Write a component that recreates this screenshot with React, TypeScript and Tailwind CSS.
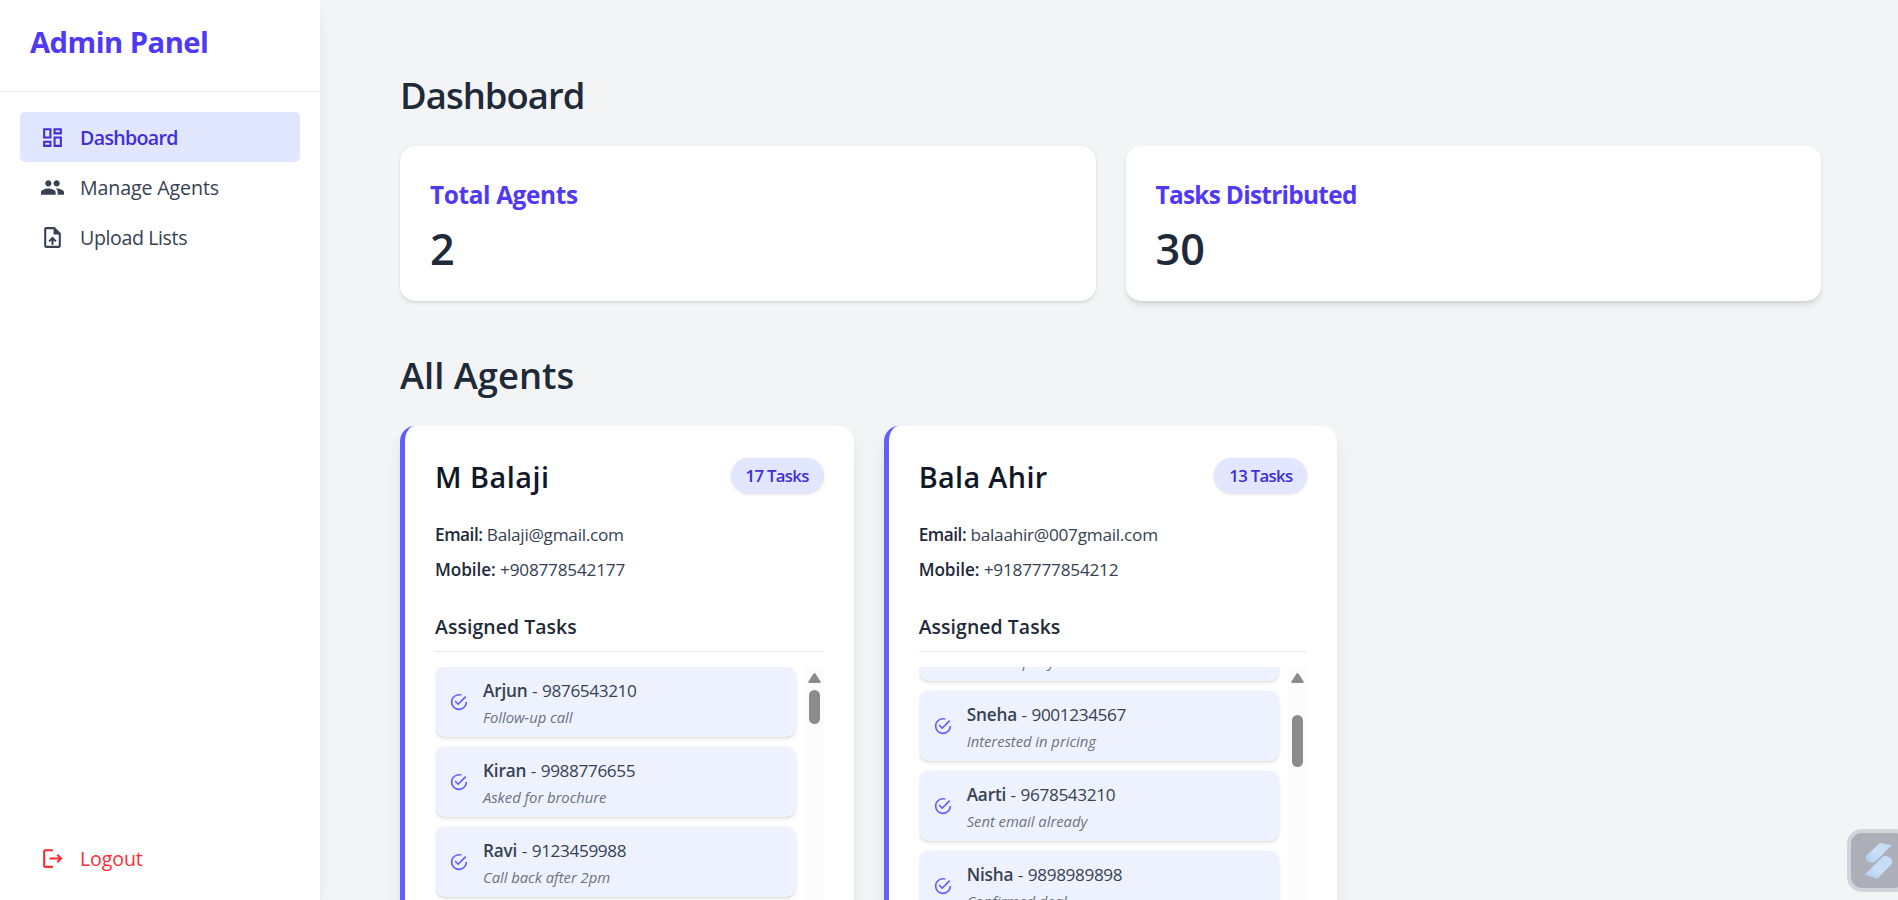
import type { ReactNode } from "react";
import { MdOutlineDashboard, MdPeople, MdOutlineUploadFile } from "react-icons/md";
import { IoMdCheckmarkCircleOutline } from "react-icons/io";

type Task = { name: string; phone: string; note: string };

type Agent = {
  name: string;
  nameClass: string;
  email: string;
  mobile: string;
  count: number;
  listClass: string;
  thumbClass: string;
  tasks: Task[];
};

const agents: Agent[] = [
  {
    name: "M Balaji",
    nameClass: "tracking-[0.018em]",
    email: "Balaji@gmail.com",
    mobile: "+908778542177",
    count: 17,
    listClass: "",
    thumbClass: "mt-[5.6px] h-[27.2px]",
    tasks: [
      { name: "Arjun", phone: "9876543210", note: "Follow-up call" },
      { name: "Kiran", phone: "9988776655", note: "Asked for brochure" },
      { name: "Ravi", phone: "9123459988", note: "Call back after 2pm" },
    ],
  },
  {
    name: "Bala Ahir",
    nameClass: "tracking-[0.0125em]",
    email: "balaahir@007gmail.com",
    mobile: "+9187777854212",
    count: 13,
    listClass: "-mt-[44.8px]",
    thumbClass: "mt-[25.6px] h-[41.6px]",
    tasks: [
      { name: "Vikram", phone: "9012345678", note: "Call company" },
      { name: "Sneha", phone: "9001234567", note: "Interested in pricing" },
      { name: "Aarti", phone: "9678543210", note: "Sent email already" },
      { name: "Nisha", phone: "9898989898", note: "Confirmed deal" },
    ],
  },
];

function LogoutIcon() {
  return (
    <svg viewBox="0 0 24 24" className="size-5" fill="none" stroke="currentColor" strokeWidth="2">
      <path d="M12.4 4H5.2A1.2 1.2 0 0 0 4 5.2v13.6A1.2 1.2 0 0 0 5.2 20h7.2" />
      <path d="M9.2 12H20" />
      <path d="M16.6 8.4 20.2 12l-3.6 3.6" />
    </svg>
  );
}

function NavItem({ icon, children, className }: { icon: ReactNode; children: ReactNode; className: string }) {
  return (
    <a className={`flex h-10 items-center gap-3 rounded px-4 text-[15.68px] ${className}`}>
      {icon}
      <span className="pt-[1.6px]">{children}</span>
    </a>
  );
}

function Sidebar() {
  return (
    <aside className="z-10 flex w-64 shrink-0 flex-col bg-white shadow-lg">
      <div className="h-[73.6px] border-b border-gray-200 px-6 pt-[17.6px]">
        <h1 className="text-[23.36px] leading-8 font-bold tracking-[-0.018em] text-[#4f39f6]">Admin Panel</h1>
      </div>
      <nav className="flex-1 p-4">
        <NavItem icon={<MdOutlineDashboard className="size-5" />} className="bg-[#e0e7ff] font-semibold tracking-[-0.034em] text-[#432dd7]">
          Dashboard
        </NavItem>
        <NavItem icon={<MdPeople className="size-5" />} className="tracking-[-0.006em] text-[#364153]">
          Manage Agents
        </NavItem>
        <NavItem icon={<MdOutlineUploadFile className="size-5" />} className="tracking-[-0.02em] text-[#364153]">
          Upload Lists
        </NavItem>
      </nav>
      <div className="px-4 pb-[13.6px]">
        <NavItem icon={<LogoutIcon />} className="tracking-[-0.006em] text-[#fb2c36]">
          Logout
        </NavItem>
      </div>
    </aside>
  );
}

function StatCard({ title, value, className, titleClass }: { title: string; value: number; className: string; titleClass: string }) {
  return (
    <div className={`h-[124px] rounded-xl bg-white px-6 pt-[25px] ${className}`}>
      <h3 className={`text-[19.52px] leading-7 font-bold text-[#4f39f6] ${titleClass}`}>{title}</h3>
      <p className="mt-[9.2px] text-[34.56px] leading-10 font-semibold text-[#1e2939]">{value}</p>
    </div>
  );
}

function TaskRow({ task }: { task: Task }) {
  return (
    <li className="flex h-14 shrink-0 items-center gap-[11.2px] rounded-lg bg-[#eef2ff] px-[11.2px] shadow-sm">
      <IoMdCheckmarkCircleOutline className="size-4 shrink-0 text-[#615fff]" />
      <div className="pt-[1.1px]">
        <p className="text-[13.76px] leading-5 text-[#364153]">
          <span className="font-semibold tracking-[-0.01em]">{task.name}</span> -{" "}
          <span className="tracking-[-0.022em]">{task.phone}</span>
        </p>
        <p className="mt-[3.1px] text-[11.84px] leading-4 tracking-[-0.002em] text-[#6a7282] italic">{task.note}</p>
      </div>
    </li>
  );
}

function AgentCard({ agent }: { agent: Agent }) {
  return (
    <article className="rounded-xl border-l-4 border-[#615fff] bg-white p-6 shadow-lg">
      <header className="flex h-8 items-center justify-between">
        <h3 className={`pt-px text-[23.04px] leading-8 font-semibold text-[#101828] ${agent.nameClass}`}>{agent.name}</h3>
        <span className="-mt-[0.8px] flex h-7 w-[74.4px] items-center justify-center rounded-full bg-[#e0e7ff] pt-[0.8px] text-[13.44px] font-semibold tracking-[-0.042em] text-[#432dd7] shadow-sm">
          {agent.count} Tasks
        </span>
      </header>
      <div className="mt-[16.8px] text-[13.76px] leading-7 text-[#364153]">
        <p className="tracking-[-0.015em]">
          <span className="font-semibold tracking-[-0.026em] text-[#1e2939]">Email:</span> {agent.email}
        </p>
        <p className="tracking-[-0.012em]">
          <span className="font-semibold tracking-[-0.004em] text-[#1e2939]">Mobile:</span> {agent.mobile}
        </p>
      </div>
      <h4 className="mt-[20px] h-[32px] border-b border-gray-200 pt-[0.8px] text-[15.52px] leading-[23px] font-semibold tracking-[0.004em] text-[#1e2939]">
        Assigned Tasks
      </h4>
      <div className="mt-3 flex h-[320px] gap-[7.2px] overflow-hidden">
        <ul className={`flex flex-1 flex-col gap-2 ${agent.listClass}`}>
          {agent.tasks.map((task) => (
            <TaskRow key={task.name} task={task} />
          ))}
        </ul>
        <div className="flex w-[15.2px] flex-col items-center bg-[#fcfcfc] pt-[5px]">
          <svg viewBox="0 0 13 10" className="h-[8px] w-[10.4px] shrink-0" fill="#8b8b8b">
            <path d="M5.5.7a1.3 1.3 0 0 1 2 0l5 7.6a1 1 0 0 1-.8 1.6H1.3a1 1 0 0 1-.8-1.6z" />
          </svg>
          <div className={`w-[8.8px] shrink-0 rounded-full bg-[#8b8b8b] ${agent.thumbClass}`} />
        </div>
      </div>
    </article>
  );
}

function FloatingWidget() {
  return (
    <div className="absolute top-[829px] -right-3 z-20 h-[63px] w-[63px] rounded-[15px] border-[4.5px] border-[#d2d4d7] bg-[#adafb8]">
      <svg viewBox="0 0 54 54" className="size-full">
        <defs>
          <linearGradient id="blade" x1="1" y1="0" x2="0" y2="1">
            <stop offset="0" stopColor="#c3daf3" />
            <stop offset="0.55" stopColor="#c9dff8" />
            <stop offset="1" stopColor="#aecbf0" />
          </linearGradient>
        </defs>
        <path d="M28.4 9.5 39.8 12 24.6 27.6c-1.6 1.7-3.6 2.2-5.6 1.4-4-1.2-5.4-4.6-3.8-7z" fill="url(#blade)" />
        <path d="M31.6 22.8c3.4-.6 8 1.2 8.8 4.2.4 1.8 0 3-1.2 4.2L25.8 44.8 13.6 41z" fill="url(#blade)" />
      </svg>
    </div>
  );
}

export default function App() {
  return (
    <div className="relative h-[900px] overflow-hidden bg-[#f3f4f6] font-['Open_Sans','Noto_Sans',sans-serif]">
      <div className="flex h-[720px] [zoom:1.25]">
        <Sidebar />
        <main className="flex-1 pt-[58px] pr-[61.6px] pl-16">
          <h2 className="text-[29.12px] leading-9 font-semibold tracking-[-0.026em] text-[#1e2939]">Dashboard</h2>
          <section className="mt-[22.8px] grid grid-cols-2 gap-6">
            <StatCard title="Total Agents" value={2} className="shadow-sm" titleClass="tracking-[-0.015em]" />
            <StatCard title="Tasks Distributed" value={30} className="shadow-md" titleClass="tracking-[-0.029em]" />
          </section>
          <h2 className="mt-[41.2px] text-[29.12px] leading-9 font-semibold tracking-[0em] text-[#1e2939]">All Agents</h2>
          <section className="mt-[22.8px] grid grid-cols-3 gap-6">
            {agents.map((agent) => (
              <AgentCard key={agent.name} agent={agent} />
            ))}
          </section>
        </main>
      </div>
      <FloatingWidget />
    </div>
  );
}
